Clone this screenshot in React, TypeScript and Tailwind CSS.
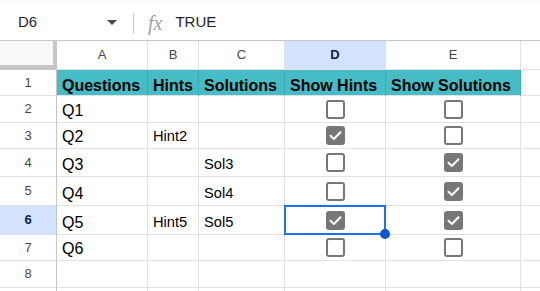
import React from "react"

type Row = {
  num: number
  h: string
  q?: string
  hint?: string
  sol?: string
  showHint?: boolean
  showSol?: boolean
}

const rows: Row[] = [
  { num: 2, h: "h-[27px]", q: "Q1", showHint: false, showSol: false },
  { num: 3, h: "h-[26px]", q: "Q2", hint: "Hint2", showHint: true, showSol: false },
  { num: 4, h: "h-[28px]", q: "Q3", sol: "Sol3", showHint: false, showSol: true },
  { num: 5, h: "h-[29px]", q: "Q4", sol: "Sol4", showHint: false, showSol: true },
  { num: 6, h: "h-[29px]", q: "Q5", hint: "Hint5", sol: "Sol5", showHint: true, showSol: true },
  { num: 7, h: "h-[26px]", q: "Q6", showHint: false, showSol: false },
  { num: 8, h: "h-[27px]" },
  // row 9 only peeks in at the bottom edge, its label is out of view
  { num: 9, h: "h-[27px]" },
]

const Checkbox = ({ checked }: { checked: boolean }) =>
  checked ? (
    <div className="w-[19px] h-[19px] rounded-[3px] bg-[#777777] flex items-center justify-center">
      <svg width="19" height="19" viewBox="0 0 19 19">
        <path d="M4.5 9.8 L7.9 13 L14.5 6.3" fill="none" stroke="white" strokeWidth="2" strokeLinecap="round" strokeLinejoin="round" />
      </svg>
    </div>
  ) : (
    <div className="w-[19px] h-[19px] rounded-[3px] border-2 border-[#777777] bg-white" />
  )

const App: React.FC = () => {
  return (
    <div className="w-[540px] h-[291px] overflow-hidden bg-white font-['Liberation_Sans',Arial,sans-serif] text-[#000]">
      {/* Formula bar */}
      <div className="h-[40px] flex flex-col">
        <div className="h-[5px] bg-[#f9fbfd]" />
        <div className="flex-1 flex items-center">
          <div className="w-[133px] flex items-center pl-[18px] pr-[16px]">
            <span className="text-[15px] text-[#1f1f1f]">D6</span>
            <div className="ml-auto w-0 h-0 border-l-[5px] border-r-[5px] border-t-[5px] border-l-transparent border-r-transparent border-t-[#444746]" />
          </div>
          <div className="w-px h-[20px] bg-[#c4c7c5]" />
          <span className="ml-[14px] font-['Liberation_Serif',serif] italic text-[20px] leading-none text-[#9aa0a6]">fx</span>
          <span className="ml-[13px] text-[15px] text-[#1f1f1f]">TRUE</span>
        </div>
      </div>

      {/* Column headers */}
      <div className="flex h-[30px] border-t border-[#c4c7c5]">
        <div className="w-[57px] h-[29px] bg-[#f8f9fa] border-r-[4px] border-b-[5px] border-[#c4c7c5]" />
        {[
          { l: "A", w: "w-[91px]" },
          { l: "B", w: "w-[51px]" },
          { l: "C", w: "w-[86px]" },
          { l: "D", w: "w-[101px]", sel: true },
          { l: "E", w: "w-[135px]" },
        ].map((c) => (
          <div
            key={c.l}
            className={`${c.w} flex items-center justify-center border-r border-b border-[#e1e1e1] text-[13px] ${
              c.sel ? "bg-[#d3e3fd] text-[#0b1f4a] font-bold" : "text-[#444746]"
            }`}
          >
            {c.l}
          </div>
        ))}
        <div className="flex-1 border-b border-[#e1e1e1]" />
      </div>

      {/* Row 1 – header */}
      <div className="flex h-[26px]">
        <div className="w-[57px] flex items-center justify-center border-r border-b border-r-[#c4c7c5] border-b-[#e1e1e1] text-[13px] text-[#444746]">
          1
        </div>
        {[
          { t: "Questions", w: "w-[91px]" },
          { t: "Hints", w: "w-[51px]" },
          { t: "Solutions", w: "w-[86px]" },
          { t: "Show Hints", w: "w-[101px]" },
          { t: "Show Solutions", w: "w-[135px]" },
        ].map((c) => (
          <div
            key={c.t}
            className={`${c.w} flex items-end pl-[5px] pb-[1px] bg-[#46bdc6] border-r border-b border-r-[#3eaab2] border-b-[#e1e1e1] text-[16px] leading-none font-bold whitespace-nowrap overflow-hidden`}
          >
            {c.t}
          </div>
        ))}
        <div className="flex-1 border-b border-[#e1e1e1]" />
      </div>

      {/* Data rows */}
      {rows.map((r) => {
        const selRow = r.num === 6
        return (
          <div key={r.num} className={`flex ${r.h}`}>
            <div
              className={`w-[57px] flex items-center justify-center border-r border-b border-r-[#c4c7c5] border-b-[#e1e1e1] text-[13px] ${
                selRow ? "bg-[#d3e3fd] text-[#0b1f4a] font-bold" : "text-[#444746]"
              }`}
            >
              {r.num < 9 ? r.num : null}
            </div>
            <div className="w-[91px] flex items-end pl-[5px] pb-[3px] border-r border-b border-[#e1e1e1] text-[16px] leading-none">
              {r.q}
            </div>
            <div className="w-[51px] flex items-end pl-[5px] pb-[4px] border-r border-b border-[#e1e1e1] text-[14.67px] leading-none">
              {r.hint}
            </div>
            <div className="w-[86px] flex items-end pl-[5px] pb-[4px] border-r border-b border-[#e1e1e1] text-[14.67px] leading-none">
              {r.sol}
            </div>
            <div className="relative w-[101px] flex items-center justify-center border-r border-b border-[#e1e1e1]">
              {r.showHint !== undefined && <Checkbox checked={r.showHint} />}
              {selRow && (
                <div className="absolute -left-[1px] -top-[1px] -right-[1px] -bottom-[1px] border-2 border-[#1a73e8] z-10">
                  <div className="absolute -right-[6px] -bottom-[6px] w-[10px] h-[10px] rounded-full bg-[#0b57d0]" />
                </div>
              )}
            </div>
            <div className="w-[135px] flex items-center justify-center border-r border-b border-[#e1e1e1]">
              {r.showSol !== undefined && <Checkbox checked={r.showSol} />}
            </div>
            <div className="flex-1 border-b border-[#e1e1e1]" />
          </div>
        )
      })}
    </div>
  )
}

export default App
